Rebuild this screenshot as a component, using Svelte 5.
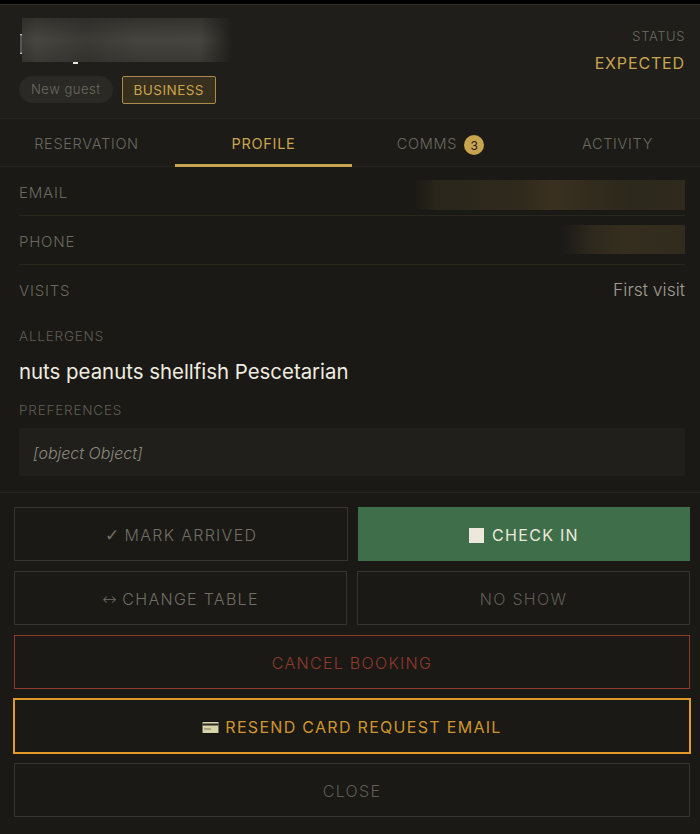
<script>
  const tabs = [
    { label: 'RESERVATION' },
    { label: 'PROFILE', active: true },
    { label: 'COMMS', badge: 3 },
    { label: 'ACTIVITY' }
  ];
</script>

<div class="page">
  <header class="head">
    <div class="who">
      <div class="name">
        <span class="stem"></span>
        <span class="smear name-smear"></span>
        <span class="tail"></span>
      </div>
      <div class="tags">
        <span class="pill">New guest</span>
        <span class="biz">BUSINESS</span>
      </div>
    </div>
    <div class="status">
      <div class="status-label">STATUS</div>
      <div class="status-value">EXPECTED</div>
    </div>
  </header>

  <nav class="tabs">
    {#each tabs as t}
      <div class="tab" class:active={t.active}>
        <span>{t.label}</span>
        {#if t.badge}<span class="badge">{t.badge}</span>{/if}
      </div>
    {/each}
  </nav>

  <section class="body">
    <div class="row line">
      <span class="label">EMAIL</span>
      <span class="smear mail"></span>
    </div>
    <div class="row line">
      <span class="label">PHONE</span>
      <span class="smear tel"></span>
    </div>
    <div class="row last">
      <span class="label">VISITS</span>
      <span class="val">First visit</span>
    </div>
    <div class="small-label allergens">ALLERGENS</div>
    <div class="allergy">nuts peanuts shellfish Pescetarian</div>
    <div class="small-label prefs">PREFERENCES</div>
    <div class="prefbox">[object Object]</div>
  </section>

  <footer class="foot">
    <div class="pair first">
      <button class="btn"><span class="glyph">✓</span> MARK ARRIVED</button>
      <button class="btn green"><span class="sq"></span>CHECK IN</button>
    </div>
    <div class="pair">
      <button class="btn"><span class="glyph">↔</span> CHANGE TABLE</button>
      <button class="btn dim">NO SHOW</button>
    </div>
    <button class="btn danger">CANCEL BOOKING</button>
    <button class="btn amber">
      <svg class="card" viewBox="0 0 17 13" width="17" height="13" aria-hidden="true">
        <rect x="0" y="0" width="17" height="13" rx="1" fill="#111"/>
        <rect x="0.5" y="1" width="16" height="11" fill="#d8d3a8"/>
        <rect x="0.5" y="2.5" width="16" height="2" fill="#2b2a20"/>
        <rect x="2" y="7" width="7" height="2" fill="#a8a487"/>
      </svg>RESEND CARD REQUEST EMAIL
    </button>
    <button class="btn dim">CLOSE</button>
  </footer>
</div>

<style>
  :global(body) {
    margin: 0;
    background: #1a1915;
  }
  .page {
    width: 700px;
    height: 834px;
    box-sizing: border-box;
    overflow: hidden;
    border-top: 4px solid #000;
    background: #1a1915;
    font-family: "Inter", "Liberation Sans", sans-serif;
    font-weight: 300;
    display: flex;
    flex-direction: column;
  }
  .head {
    height: 115px;
    box-sizing: border-box;
    flex: none;
    background: #1f1e1a;
    border-top: 1px solid #33322d;
    border-bottom: 1px solid #26251f;
    padding: 13px 15px 0 19px;
    display: flex;
    justify-content: space-between;
  }
  .name {
    position: relative;
    height: 44px;
    width: 213px;
  }
  .smear { display: block; }
  .name-smear {
    position: absolute;
    left: 3px;
    top: 0;
    width: 210px;
    height: 44px;
    background:
      linear-gradient(to bottom, rgba(31,30,26,.5), rgba(31,30,26,.05) 50%, rgba(31,30,26,.35)),
      linear-gradient(to right, #3f3e36 0, #494842 7%, #3d3c37 30%, #474640 55%, #484741 85%, #1f1e1a 100%);
  }
  .stem {
    position: absolute;
    left: 1px;
    top: 16px;
    width: 2px;
    height: 20px;
    background: linear-gradient(#ddd, #555 10%, #555 90%, #ddd);
  }
  .tail {
    position: absolute;
    left: 54px;
    top: 44px;
    width: 5px;
    height: 2px;
    background: #e8e6dd;
  }
  .tags {
    display: flex;
    align-items: center;
    gap: 9px;
    margin-top: 12px;
  }
  .pill {
    height: 27px;
    line-height: 27px;
    padding: 0 12px;
    border-radius: 14px;
    background: #2a2925;
    color: #6c6a60;
    font-size: 13px;
    letter-spacing: 0.5px;
  }
  .biz {
    height: 26px;
    line-height: 26px;
    padding: 0 11px;
    border: 1px solid #a98c49;
    border-radius: 2px;
    background: #38301f;
    color: #c9a44e;
    font-size: 13.5px;
    font-weight: 400;
    letter-spacing: 0.45px;
    margin-top: 2px;
  }
  .status {
    text-align: right;
    padding-top: 10px;
  }
  .status-label {
    color: #6b695f;
    font-size: 13px;
    line-height: 16px;
    letter-spacing: 0.6px;
  }
  .status-value {
    margin-top: 9px;
    color: #c9a44e;
    font-size: 16px;
    font-weight: 400;
    line-height: 20px;
    letter-spacing: 0.85px;
  }
  .tabs {
    flex: none;
    height: 48px;
    box-sizing: border-box;
    display: grid;
    grid-template-columns: repeat(4, 177px);
    margin-left: -2px;
    background: #1c1b17;
    border-bottom: 1px solid #26251f;
  }
  .tab {
    height: 48px;
    box-sizing: border-box;
    border-bottom: 3px solid transparent;
    display: flex;
    align-items: center;
    justify-content: center;
    gap: 7px;
    padding-top: 4px;
    color: #6b695f;
    font-size: 14.5px;
    letter-spacing: 0.7px;
  }
  .tab.active {
    color: #c9a44e;
    font-weight: 400;
    border-bottom-color: #c9a44e;
  }
  .badge {
    width: 20px;
    height: 20px;
    border-radius: 50%;
    background: #c9a44e;
    color: #1a1915;
    font-size: 12px;
    font-weight: 400;
    letter-spacing: 0;
    text-align: center;
    line-height: 21px;
    margin-top: 2px;
  }
  .body {
    flex: none;
    height: 326px;
    box-sizing: border-box;
    padding: 0 15px 0 19px;
    border-bottom: 1px solid #26251f;
  }
  .row {
    height: 49px;
    box-sizing: border-box;
    display: flex;
    align-items: center;
    justify-content: space-between;
  }
  .row.line {
    border-bottom: 1px solid #28271e;
  }
  .label {
    color: #6b695f;
    font-size: 15px;
    letter-spacing: 0.8px;
    padding-top: 3px;
  }
  .row.last .label { padding-top: 1px; }
  .val {
    color: #a09d92;
    font-size: 17.5px;
    margin-top: -1px;
  }
  .mail {
    width: 270px;
    height: 30px;
    margin-top: 8px;
    background: linear-gradient(to right, #1a1915 0, #2a261b 8%, #302a1d 40%, #393020 50%, #2d281c 80%, #2f2a1d 100%);
  }
  .tel {
    width: 124px;
    height: 29px;
    margin-top: -1px;
    background: linear-gradient(to right, #1a1915 0, #2d291d 25%, #352e1f 50%, #312b1e 100%);
  }
  .small-label {
    color: #5f5d54;
    font-size: 13.5px;
    line-height: 16px;
    letter-spacing: 0.8px;
  }
  .allergens { margin-top: 14px; }
  .allergy {
    margin-top: 14px;
    color: #f0ece0;
    font-size: 20.4px;
    font-weight: 400;
    line-height: 28px;
  }
  .prefs { margin-top: 16px; }
  .prefbox {
    margin-top: 10px;
    height: 48px;
    box-sizing: border-box;
    padding: 0 14px;
    border-radius: 3px;
    background: #201f1b;
    color: #8b887d;
    font-size: 16px;
    font-style: italic;
    line-height: 50px;
  }
  .foot {
    flex: 1;
    padding: 14px 10px 0 14px;
    display: flex;
    flex-direction: column;
    gap: 10px;
  }
  .pair {
    display: grid;
    grid-template-columns: 333px 333px;
    gap: 10px;
  }
  .pair.first {
    grid-template-columns: 334px 332px;
  }
  .btn {
    height: 54px;
    box-sizing: border-box;
    background: transparent;
    border: 1px solid #363530;
    border-radius: 0;
    color: #716e64;
    font: inherit;
    font-size: 16px;
    letter-spacing: 1.3px;
    display: block;
    width: 100%;
    padding: 2px 0 0;
    text-align: center;
  }
  .btn.dim { color: #5f5d55; }
  .glyph {
    font-family: "DejaVu Sans", sans-serif;
    font-size: 17px;
    letter-spacing: 0;
  }
  .green {
    background: #3f6f4a;
    border-color: #3f6f4a;
    color: #ece8dc;
    font-weight: 400;
  }
  .sq {
    display: inline-block;
    width: 15px;
    height: 15px;
    background: #ece8dc;
    margin-right: 8px;
    vertical-align: -2px;
  }
  .danger {
    border-color: #8f3a2d;
    color: #8f3a2d;
  }
  .amber {
    border-color: #e09a26;
    outline: 1px solid #e09a26;
    color: #cf962f;
    font-weight: 400;
  }
  .card {
    margin-right: 6px;
    vertical-align: -1px;
  }
</style>
